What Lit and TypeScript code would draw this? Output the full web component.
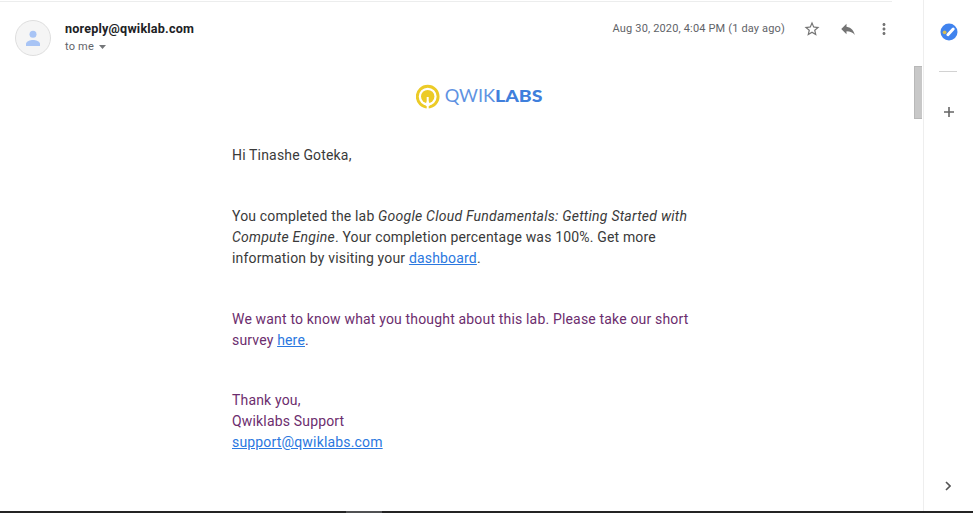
import { LitElement, html, css } from "lit";
import { customElement } from "lit/decorators.js";

@customElement("mail-header")
class MailHeader extends LitElement {
  static styles = css`
    :host { display: flex; align-items: flex-start; width: 892px; height: 71px; box-sizing: border-box; border-top: 1px solid #eceded; margin-top: 1px; color: #5f6368; }
    svg { display: block; flex: none; }
    .avatar { margin: 18px 14px 0 15px; }
    .from { flex: 1; padding-top: 18px; }
    .name { font-size: 12.6px; line-height: 18px; font-weight: 700; letter-spacing: 0.2px; color: #202124; white-space: nowrap; }
    .to { display: flex; align-items: center; font-size: 11px; line-height: 18px; letter-spacing: 0.2px; }
    .arrow { margin-left: 5px; margin-bottom: 1px; }
    .date { font-size: 11px; line-height: 18px; letter-spacing: 0.16px; padding-top: 18px; white-space: nowrap; }
    .actions { display: flex; align-items: center; height: 18px; margin-top: 18px; }
    .star { margin-left: 18px; }
    .reply { margin-left: 18px; }
    .more { margin-left: 18px; margin-right: -1px; }
  `;
  render() {
    return html`
      <svg class="avatar" width="36" height="36" viewBox="0 0 36 36">
        <circle cx="18" cy="18" r="17.5" fill="#f5f5f5" stroke="#dedede" />
        <circle cx="18" cy="14.3" r="3.5" fill="#a8c4f5" />
        <path d="M11 26v-1.9c0-2.6 4.4-4 7-4s7 1.4 7 4V26z" fill="#a8c4f5" />
      </svg>
      <div class="from">
        <div class="name">noreply@qwiklab.com</div>
        <div class="to">to me<svg class="arrow" width="7" height="4" viewBox="0 0 7 4"><path d="M0 0h7L3.5 4z" fill="#747679" /></svg></div>
      </div>
      <div class="date">Aug 30, 2020, 4:04 PM (1 day ago)</div>
      <div class="actions">
        <svg class="star" width="18" height="18" viewBox="0 0 24 24" fill="#747474"><path d="M22 9.24l-7.19-.62L12 2 9.19 8.63 2 9.24l5.46 4.73L5.82 21 12 17.27 18.18 21l-1.63-7.03L22 9.24zM12 15.4l-3.76 2.27 1-4.28-3.32-2.88 4.38-.38L12 6.1l1.71 4.04 4.38.38-3.32 2.88 1 4.28L12 15.4z" /></svg>
        <svg class="reply" width="18" height="18" viewBox="0 0 24 24" fill="#747474"><path d="M10 9V5l-7 7 7 7v-4.1c5 0 8.500 1.600 11 5.100-1-5-4-10-11-11z" /></svg>
        <svg class="more" width="18" height="18" viewBox="0 0 24 24" fill="#747474"><path d="M12 8c1.100 0 2-.9 2-2s-.9-2-2-2-2 .9-2 2 .9 2 2 2zm0 2c-1.100 0-2 .9-2 2s.9 2 2 2 2-.9 2-2-.9-2-2-2zm0 6c-1.100 0-2 .9-2 2s.9 2 2 2 2-.9 2-2-.9-2-2-2z" /></svg>
      </div>
    `;
  }
}

@customElement("mail-body")
class MailBody extends LitElement {
  static styles = css`
    :host { display: block; width: 480px; margin-left: 232px; font-size: 14px; line-height: 21px; letter-spacing: 0.17px; color: #3a3a3a; white-space: nowrap; }
    .logo { display: flex; align-items: center; margin: 12px 0 36px 184px; height: 25px; }
    .word { display: block; font-family: Lato, sans-serif; letter-spacing: 0; }
    p { margin: 0 0 40px; }
    em { letter-spacing: 0.24px; }
    .quoted { color: #6c2d6e; }
    .survey { margin-bottom: 39px; }
    a { color: #2b78e0; text-decoration: underline; }
  `;
  render() {
    return html`
      <div class="logo">
        <svg width="128" height="25" viewBox="0 0 128 25" class="word">
          <circle cx="11.700" cy="12.600" r="10.400" fill="none" stroke="#eccb27" stroke-width="2.900" />
          <circle cx="11.700" cy="12.600" r="6.700" fill="#eccb27" />
          <path d="M10.700 13h2v4l1.300 4.200-1.300 1V25h-2v-2.800l-1.300-1 1.300-4.200z" fill="#fff" />
          <text x="28.700" y="18.200" font-size="16.500" font-weight="400" fill="#5f93e2" textLength="50.500" lengthAdjust="spacingAndGlyphs">QWIK</text>
          <text x="79" y="18.200" font-size="16.500" font-weight="900" fill="#3f7fdc" textLength="47.500" lengthAdjust="spacingAndGlyphs">LABS</text>
        </svg>
      </div>
      <p>Hi Tinashe Goteka,</p>
      <p>You completed the lab <em>Google Cloud Fundamentals: Getting Started with<br />Compute Engine</em>. Your completion percentage was 100%. Get more<br />information by visiting your <a>dashboard</a>.</p>
      <p class="quoted survey">We want to know what you thought about this lab. Please take our short<br />survey <a>here</a>.</p>
      <p class="quoted">Thank you,<br />Qwiklabs Support<br /><a>support@qwiklabs.com</a></p>
    `;
  }
}

@customElement("side-panel")
class SidePanel extends LitElement {
  static styles = css`
    :host { display: flex; flex-direction: column; align-items: center; box-sizing: border-box; border-left: 1px solid #eeeeee; padding-top: 23px; }
    svg { display: block; flex: none; }
    .rule { width: 18px; height: 1px; background: #d2d2d2; margin: 30px 1px 35px 0; }
    .open { margin-top: auto; margin-bottom: 20px; margin-right: 1px; }
  `;
  render() {
    return html`
      <svg width="18" height="18" viewBox="0 0 18 18">
        <circle cx="9" cy="9" r="8.500" fill="#4083ee" />
        <path d="M7.900 11.700L13.200 6" stroke="#fff" stroke-width="3" stroke-linecap="round" />
        <circle cx="4.600" cy="9.300" r="1.900" fill="#d6bd55" />
      </svg>
      <div class="rule"></div>
      <svg width="10" height="10" viewBox="0 0 10 10"><path d="M5 0v10M0 5h10" stroke="#666" stroke-width="1.600" /></svg>
      <svg class="open" width="6" height="10" viewBox="0 0 6 10"><path d="M1 1l4 4-4 4" fill="none" stroke="#555" stroke-width="1.600" /></svg>
    `;
  }
}

@customElement("app-root")
class AppRoot extends LitElement {
  static styles = css`
    :host { display: flex; flex-direction: column; height: 513px; overflow: hidden; background: #fff; font-family: Roboto, sans-serif; }
    .window { display: grid; grid-template-columns: 914px 9px 1fr; grid-template-rows: 511px; height: 511px; }
    .thumb { width: 7px; height: 51px; margin-top: 66px; background: #c8c8c8; border: 1px solid #b8b8b8; border-width: 1px 0 1px 1px; box-sizing: content-box; }
    .taskbar { height: 2px; background: #242424; }
    .active { width: 36px; height: 2px; margin-left: 346px; background: #505153; }
  `;
  render() {
    return html`
      <div class="window">
        <main><mail-header></mail-header><mail-body></mail-body></main>
        <div class="thumb"></div>
        <side-panel></side-panel>
      </div>
      <div class="taskbar"><div class="active"></div></div>
    `;
  }
}
